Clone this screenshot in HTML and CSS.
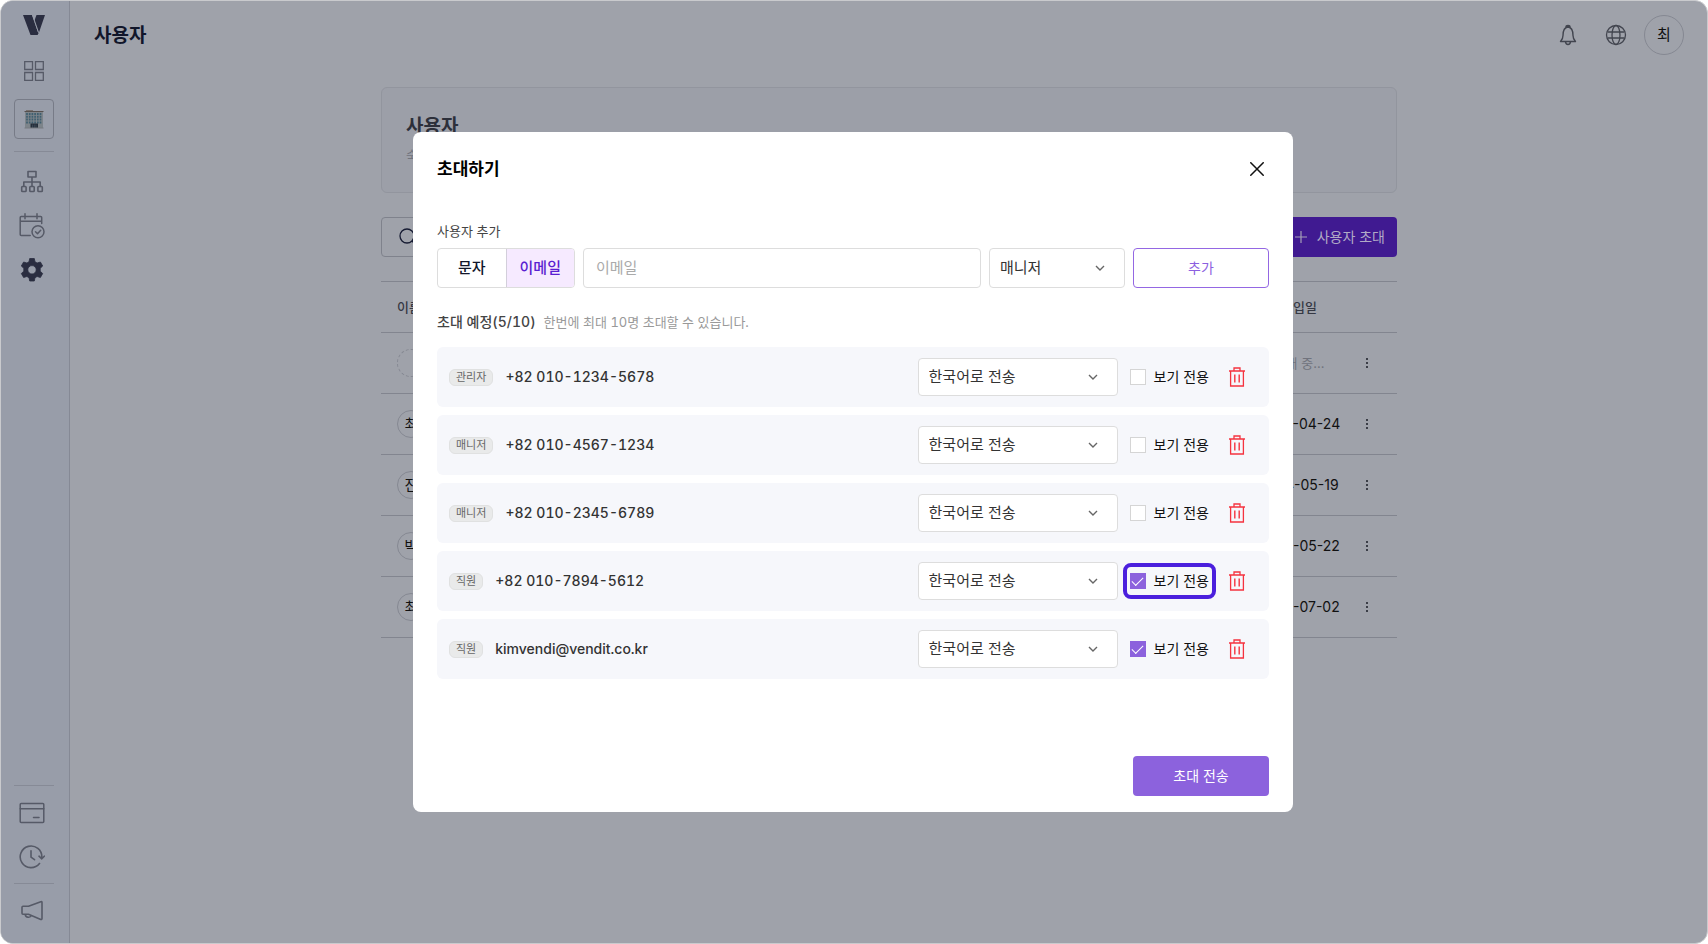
FILE: index.html
```html
<!DOCTYPE html>
<html lang="ko">

<head>
    <meta charset="UTF-8">
    <meta name="viewport" content="width=device-width, initial-scale=1.0">
    <title>사용자</title>
    <link rel="stylesheet" href="styles.css">
</head>

<body>
    <!-- shared icons -->
    <svg class="icon-defs" width="0" height="0">
        <symbol id="chevron" viewBox="0 0 10 6">
            <path d="M1 1l4 4 4-4" fill="none" stroke="#666" stroke-width="1.4" />
        </symbol>
        <symbol id="trash" viewBox="0 0 16 20">
            <path d="M0 4h16M5 3.5V1h6v2.500M1.600 4v15h12.800V4" fill="none" stroke="#f5333f" stroke-width="1.300" />
            <path d="M5.800 7.500v8M10.200 7.500v8" fill="none" stroke="#f5333f" stroke-width="1.400" />
        </symbol>
        <symbol id="dots" viewBox="0 0 4 12">
            <path d="M1 1h2v2H1zM1 5h2v2H1zM1 9h2v2H1z" fill="#3b3e47" />
        </symbol>
    </svg>

    <div class="app">
        <nav class="sidebar">
            <div class="nav-group">
                <a href="#" class="logo" aria-label="홈">
                    <svg width="22" height="20" viewBox="0 0 22 20">
                        <path d="M0 0h9l4.500 13L15.500 18.500 14.500 20H7.500z" fill="#2a2d40" />
                        <path d="M13.500 0H22L15.800 18 11.300 6z" fill="#2a2d40" />
                        <path d="M9.500 0l6 17.500" stroke="#989da9" stroke-width="1" />
                    </svg>
                </a>
                <a href="#" class="nav-dashboard" aria-label="대시보드">
                    <svg width="20" height="20" viewBox="0 0 20 20" fill="none" stroke="#565a67" stroke-width="1.300">
                        <path d="M.7.7h7.800v7.800H.7zM11.500.7h7.800v7.800h-7.800zM.7 11.500h7.800v7.800H.7zM11.500 11.500h7.800v7.800h-7.800z" />
                    </svg>
                </a>
                <a href="#" class="nav-building" aria-label="숙소">
                    <svg width="20" height="20" viewBox="0 0 20 20">
                        <path d="M2 1h7v1H2z" fill="#77706e" />
                        <path d="M1 2.500h18V19H1z" fill="#7d848a" />
                        <path d="M.5 2h19v1H.5z" fill="#56504e" />
                        <path d="M3 4v11M5.700 4v11M8.400 4v11M11.100 4v11M13.800 4v11M16.500 4v11" stroke="#3f5f70" stroke-width="1.700" stroke-dasharray="2 .8" />
                        <path d="M6.500 14.500h7.500V19H6.500z" fill="#252e3a" />
                        <path d="M8.500 15.500V19M10.300 15.500V19M12 15.500V19" stroke="#53616e" stroke-width=".5" />
                        <path d="M.5 19h19" stroke="#777a80" stroke-width="1" />
                    </svg>
                </a>
                <hr>
                <a href="#" class="nav-link" aria-label="조직">
                    <svg width="26" height="26" viewBox="0 0 26 26" fill="none" stroke="#565a67" stroke-width="1.600" stroke-linejoin="round">
                        <path d="M9 2.500h8V8H9zM13 8v9M4.800 17.500v-4.500h16.400v4.500" />
                        <rect x="2.700" y="17.500" width="4.400" height="5" rx=".8" />
                        <rect x="10.800" y="17.500" width="4.400" height="5" rx=".8" />
                        <rect x="18.900" y="17.500" width="4.400" height="5" rx=".8" />
                    </svg>
                </a>
                <a href="#" class="nav-link" aria-label="예약">
                    <svg width="26" height="26" viewBox="0 0 26 26" fill="none" stroke="#565a67" stroke-width="1.500" stroke-linecap="round" stroke-linejoin="round">
                        <path d="M22.700 10.500V4.500q0-1-1-1H2.200q-1 0-1 1v17q0 1 1 1h9M1.200 8.300h21.500M6 .8v5M18 .8v5" />
                        <circle cx="19" cy="18.700" r="6" />
                        <path d="M16.500 18.700l2 2 3.200-3.500" />
                    </svg>
                </a>
                <a href="#" class="nav-link" aria-label="설정">
                    <svg width="26" height="26" viewBox="0 0 26 26">
                        <path d="M10.700 1.500h4.600l.7 3.300 2.100 1.200 3.300-1 2.300 4-2.500 2.300v2.900l2.500 2.300-2.300 4-3.300-1-2.100 1.200-.7 3.300h-4.600l-.7-3.300-2.100-1.200-3.300 1-2.300-4 2.500-2.300v-2.900L2.300 9l2.300-4 3.300 1L10 4.800zM13 8.600a4.200 4.200 0 1 0 0 8.400 4.200 4.200 0 0 0 0-8.400z" fill="#2a2d40" stroke="#2a2d40" stroke-width=".8" stroke-linejoin="round" fill-rule="evenodd" />
                    </svg>
                </a>
            </div>
            <div class="nav-group nav-bottom">
                <hr>
                <a href="#" class="nav-link" aria-label="결제">
                    <svg width="26" height="26" viewBox="0 0 26 26" fill="none" stroke="#565a67" stroke-width="1.500" stroke-linecap="round">
                        <rect x="1.200" y="3.500" width="23.600" height="19" rx="1" />
                        <path d="M1.200 8.700h23.600M14.500 17.500h5.500" />
                    </svg>
                </a>
                <a href="#" class="nav-link" aria-label="이력">
                    <svg width="26" height="26" viewBox="0 0 26 26" fill="none" stroke="#565a67" stroke-width="1.600" stroke-linecap="round" stroke-linejoin="round">
                        <path d="M20.500 19.500A10.800 10.800 0 1 1 22.800 13.500M20 12.200l2.800 2.600 2.500-2.600M12 6.800v6.400l3.500 2.500" />
                    </svg>
                </a>
                <hr>
                <a href="#" class="nav-link" aria-label="공지">
                    <svg width="26" height="26" viewBox="0 0 26 26" fill="none" stroke="#565a67" stroke-width="1.600" stroke-linejoin="round">
                        <path d="M3 9.200q0-1 1-1H9.500L21.800 3.700q1.200-.3 1.200.8v16q0 1.200-1.200.9L9.500 16.200H4q-1 0-1-1z" />
                        <path d="M6.200 16.300a3.300 3.300 0 0 0 6.300 1" />
                    </svg>
                </a>
            </div>
        </nav>

        <div class="page">
            <header class="topbar">
                <h1>사용자</h1>
                <div class="topbar-actions">
                    <button type="button" class="icon-button" aria-label="알림">
                        <svg width="24" height="24" viewBox="0 0 24 24" fill="none" stroke="#42454f" stroke-width="1.400" stroke-linejoin="round">
                            <path d="M4.500 18.500q2.500-2.500 2.500-6 0-8 5-8.500 5 .5 5 8.500 0 3.500 2.500 6zM10 4.200q0-1.700 2-1.700t2 1.700M9.500 19q.5 2.500 2.500 2.500t2.500-2.500" />
                        </svg>
                    </button>
                    <button type="button" class="icon-button" aria-label="언어">
                        <svg width="24" height="24" viewBox="0 0 24 24" fill="none" stroke="#42454f" stroke-width="1.300">
                            <circle cx="12" cy="12" r="9.500" />
                            <ellipse cx="12" cy="12" rx="4" ry="9.500" />
                            <path d="M3.500 9h17M3.500 15h17" />
                        </svg>
                    </button>
                    <button type="button" class="profile">최</button>
                </div>
            </header>

            <main class="content">
                <section class="intro">
                    <h2>사용자</h2>
                    <p>숙소 사용자를 초대하고 관리할 수 있습니다.</p>
                </section>

                <div class="toolbar">
                    <label class="search">
                        <svg width="18" height="18" viewBox="0 0 18 18" fill="none" stroke="#171c33" stroke-width="1.300">
                            <circle cx="8" cy="8" r="7" />
                            <path d="M13 13l4 4" />
                        </svg>
                        <input type="text" aria-label="검색">
                    </label>
                    <button type="button" class="invite-button">
                        <svg width="12" height="12" viewBox="0 0 12 12" stroke="#a5a0b8" stroke-width="1.200">
                            <path d="M0 6h12M6 0v12" />
                        </svg>
                        사용자 초대
                    </button>
                </div>

                <table class="users">
                    <thead>
                        <tr>
                            <th>이름</th>
                            <th class="date">가입일</th>
                            <th class="more"></th>
                        </tr>
                    </thead>
                    <tbody>
                        <tr>
                            <td><span class="avatar pending"></span></td>
                            <td class="date waiting">초대 중...</td>
                            <td class="more"><button type="button" aria-label="더보기"><svg width="4" height="12"><use href="#dots" /></svg></button></td>
                        </tr>
                        <tr>
                            <td><span class="avatar">최</span></td>
                            <td class="date">2024-04-24</td>
                            <td class="more"><button type="button" aria-label="더보기"><svg width="4" height="12"><use href="#dots" /></svg></button></td>
                        </tr>
                        <tr>
                            <td><span class="avatar">진</span></td>
                            <td class="date">2024-05-19</td>
                            <td class="more"><button type="button" aria-label="더보기"><svg width="4" height="12"><use href="#dots" /></svg></button></td>
                        </tr>
                        <tr>
                            <td><span class="avatar">박</span></td>
                            <td class="date">2024-05-22</td>
                            <td class="more"><button type="button" aria-label="더보기"><svg width="4" height="12"><use href="#dots" /></svg></button></td>
                        </tr>
                        <tr>
                            <td><span class="avatar">최</span></td>
                            <td class="date">2024-07-02</td>
                            <td class="more"><button type="button" aria-label="더보기"><svg width="4" height="12"><use href="#dots" /></svg></button></td>
                        </tr>
                    </tbody>
                </table>
            </main>
        </div>
    </div>

    <div class="overlay">
        <div class="modal" role="dialog" aria-labelledby="modal-title">
            <div class="modal-header">
                <h2 id="modal-title">초대하기</h2>
                <button type="button" class="icon-button" aria-label="닫기">
                    <svg width="14" height="14" viewBox="0 0 14 14" stroke="#111" stroke-width="1.500">
                        <path d="M.3.300l13.400 13.400M13.700.300L.3 13.700" />
                    </svg>
                </button>
            </div>

            <label class="field-label" for="email">사용자 추가</label>
            <div class="add-row">
                <div class="toggle">
                    <button type="button">문자</button>
                    <button type="button" class="active">이메일</button>
                </div>
                <input type="text" id="email" class="email" placeholder="이메일">
                <div class="select role">
                    <select aria-label="권한">
                        <option>매니저</option>
                        <option>관리자</option>
                        <option>직원</option>
                    </select>
                    <svg width="10" height="6"><use href="#chevron" /></svg>
                </div>
                <button type="button" class="add-button">추가</button>
            </div>

            <p class="summary"><strong>초대 예정(5/10)</strong><span>한번에 최대 10명 초대할 수 있습니다.</span></p>

            <ul class="invites">
                <li>
                    <span class="badge">관리자</span>
                    <span class="contact">+82 010-1234-5678</span>
                    <div class="select">
                        <select aria-label="전송 언어">
                            <option>한국어로 전송</option>
                        </select>
                        <svg width="10" height="6"><use href="#chevron" /></svg>
                    </div>
                    <label class="view-only"><input type="checkbox">보기 전용</label>
                    <button type="button" class="delete" aria-label="삭제"><svg width="16" height="20"><use href="#trash" /></svg></button>
                </li>
                <li>
                    <span class="badge">매니저</span>
                    <span class="contact">+82 010-4567-1234</span>
                    <div class="select">
                        <select aria-label="전송 언어">
                            <option>한국어로 전송</option>
                        </select>
                        <svg width="10" height="6"><use href="#chevron" /></svg>
                    </div>
                    <label class="view-only"><input type="checkbox">보기 전용</label>
                    <button type="button" class="delete" aria-label="삭제"><svg width="16" height="20"><use href="#trash" /></svg></button>
                </li>
                <li>
                    <span class="badge">매니저</span>
                    <span class="contact">+82 010-2345-6789</span>
                    <div class="select">
                        <select aria-label="전송 언어">
                            <option>한국어로 전송</option>
                        </select>
                        <svg width="10" height="6"><use href="#chevron" /></svg>
                    </div>
                    <label class="view-only"><input type="checkbox">보기 전용</label>
                    <button type="button" class="delete" aria-label="삭제"><svg width="16" height="20"><use href="#trash" /></svg></button>
                </li>
                <li>
                    <span class="badge">직원</span>
                    <span class="contact">+82 010-7894-5612</span>
                    <div class="select">
                        <select aria-label="전송 언어">
                            <option>한국어로 전송</option>
                        </select>
                        <svg width="10" height="6"><use href="#chevron" /></svg>
                    </div>
                    <label class="view-only highlight"><input type="checkbox" checked>보기 전용</label>
                    <button type="button" class="delete" aria-label="삭제"><svg width="16" height="20"><use href="#trash" /></svg></button>
                </li>
                <li>
                    <span class="badge">직원</span>
                    <span class="contact">kimvendi@vendit.co.kr</span>
                    <div class="select">
                        <select aria-label="전송 언어">
                            <option>한국어로 전송</option>
                        </select>
                        <svg width="10" height="6"><use href="#chevron" /></svg>
                    </div>
                    <label class="view-only"><input type="checkbox" checked>보기 전용</label>
                    <button type="button" class="delete" aria-label="삭제"><svg width="16" height="20"><use href="#trash" /></svg></button>
                </li>
            </ul>

            <div class="modal-footer">
                <button type="button" class="send-button">초대 전송</button>
            </div>
        </div>
    </div>
</body>

</html>
```
FILE: styles.css
```css
* {
    box-sizing: border-box;
}

body {
    margin: 0;
    background: #fff;
    font-family: Inter, "Noto Sans CJK KR", sans-serif;
    font-size: 15px;
    line-height: 22px;
    color: #111;
}

h1,
h2,
p,
ul {
    margin: 0;
    padding: 0;
}

button,
input,
select {
    font: inherit;
    color: inherit;
}

button {
    padding: 0;
    border: none;
    background: none;
    cursor: pointer;
}

svg {
    display: block;
}

.icon-defs {
    position: absolute;
}

.icon-button {
    display: flex;
    align-items: center;
    justify-content: center;
    width: 24px;
    height: 24px;
}

/* page */
.app {
    display: flex;
    min-height: 100vh;
    border: 1px solid #c9cacd;
    border-radius: 13px;
    background: #9fa2aa;
    overflow: hidden;
}

.sidebar {
    display: flex;
    flex-direction: column;
    justify-content: space-between;
    width: 69px;
    padding: 14px 15px 10px 13px;
    background: #989da9;
    border-right: 1px solid #858995;
}

.nav-group {
    display: flex;
    flex-direction: column;
}

.nav-group hr {
    width: 100%;
    height: 1px;
    margin: 12px 0 8px;
    border: none;
    background: #868a96;
}

.nav-bottom hr {
    margin: 4px 0 5px;
}

.nav-link {
    display: flex;
    align-items: center;
    height: 44px;
    padding-left: 5px;
}

.logo {
    align-self: center;
}

.nav-dashboard {
    align-self: center;
    margin: 26px 0 18px;
}

.nav-building {
    display: flex;
    align-items: center;
    justify-content: center;
    width: 40px;
    height: 40px;
    border: 1px solid #777b87;
    border-radius: 4px;
}

.page {
    flex: 1;
    padding: 14px 23px 0 24px;
}

.topbar {
    display: flex;
    align-items: center;
    justify-content: space-between;
    height: 40px;
}

.topbar h1 {
    padding-top: 2px;
    font-size: 19px;
    font-weight: 700;
    color: #11162a;
}

.topbar-actions {
    display: flex;
    align-items: center;
    gap: 24px;
}

.profile {
    width: 40px;
    height: 40px;
    margin-left: -8px;
    border: 1px solid #858892;
    border-radius: 50%;
}

.content {
    max-width: 1016px;
    margin: 32px auto 0;
}

.intro {
    height: 106px;
    padding: 27px 24px;
    border: 1px solid #92959e;
    border-radius: 6px;
    background: #9c9fa8;
}

.intro h2 {
    font-size: 19px;
    font-weight: 700;
    line-height: 24px;
    color: #2c2f3a;
}

.intro p {
    margin-top: 5px;
    font-size: 13px;
    color: #70737d;
}

.toolbar {
    display: flex;
    justify-content: space-between;
    margin: 24px 0;
}

.search {
    display: flex;
    align-items: center;
    width: 300px;
    height: 40px;
    padding: 0 17px;
    border: 1px solid #7f828c;
    border-radius: 4px;
}

.search input {
    flex: 1;
    min-width: 0;
    border: none;
    background: none;
}

.invite-button {
    display: flex;
    align-items: center;
    gap: 10px;
    height: 40px;
    padding: 0 12px;
    border-radius: 4px;
    background: #401a91;
    font-size: 14px;
    color: #b1aac6;
}

.users {
    width: 100%;
    table-layout: fixed;
    border-collapse: collapse;
    border-top: 1px solid #82858f;
    font-size: 14px;
}

.users tr {
    border-bottom: 1px solid #82858f;
}

.users th {
    height: 51px;
    padding: 0 16px;
    font-size: 13px;
    font-weight: 500;
    text-align: left;
    color: #363944;
}

.users td {
    height: 61px;
    padding: 0 16px;
}

.users .date {
    width: 92px;
    padding: 0;
    text-align: center;
    white-space: nowrap;
}

.users .waiting {
    font-size: 13px;
    color: #70737d;
}

.users .more {
    width: 52px;
    padding: 0 8px 0 0;
}

.users .more button {
    display: block;
    margin: 0 auto;
}

.avatar {
    display: flex;
    align-items: center;
    justify-content: center;
    width: 28px;
    height: 28px;
    border: 1px solid #858892;
    border-radius: 50%;
}

.avatar.pending {
    border-style: dashed;
}

/* invite modal */
.overlay {
    position: fixed;
    inset: 0;
    display: flex;
    align-items: center;
    justify-content: center;
    padding-right: 2px;
}

.modal {
    display: flex;
    flex-direction: column;
    width: 880px;
    max-width: 100%;
    min-height: 680px;
    padding: 25px 24px 16px;
    border-radius: 8px;
    background: #fff;
}

.modal-header {
    display: flex;
    align-items: center;
    justify-content: space-between;
}

.modal-header h2 {
    font-size: 17px;
    font-weight: 700;
    line-height: 24px;
    color: #000;
}

.field-label {
    margin: 40px 0 7px;
    font-size: 13px;
    line-height: 20px;
    color: #444;
}

.add-row {
    display: flex;
    gap: 8px;
    height: 40px;
}

.toggle {
    display: flex;
    width: 138px;
    border: 1px solid #ddd;
    border-radius: 4px;
    overflow: hidden;
}

.toggle button {
    flex: 1;
    font-weight: 500;
    color: #11162a;
}

.toggle .active {
    border-left: 1px solid #d3cfdb;
    background: #f6eaff;
    color: #5a1fd1;
}

.email {
    flex: 1;
    min-width: 0;
    padding: 0 12px;
    border: 1px solid #ddd;
    border-radius: 4px;
}

.email::placeholder {
    color: #aaa;
}

.select {
    position: relative;
    width: 200px;
    height: 38px;
}

.select select {
    width: 100%;
    height: 100%;
    padding: 0 10px;
    border: 1px solid #ddd;
    border-radius: 4px;
    background: #fff;
    color: #333;
    appearance: none;
}

.select svg {
    position: absolute;
    top: 50%;
    right: 20px;
    margin-top: -3px;
    pointer-events: none;
}

.select.role {
    width: 136px;
    height: 40px;
}

.add-button {
    width: 136px;
    border: 1px solid #9467e3;
    border-radius: 4px;
    font-size: 14px;
    color: #8c5fe0;
}

.summary {
    display: flex;
    gap: 8px;
    margin: 23px 0 14px;
    font-size: 13px;
    font-variant-numeric: tabular-nums;
    color: #999;
}

.summary strong {
    font-size: 14px;
    font-weight: 500;
    color: #444;
}

.invites {
    display: flex;
    flex-direction: column;
    gap: 8px;
    list-style: none;
}

.invites li {
    display: flex;
    align-items: center;
    height: 60px;
    padding: 0 24px 0 12px;
    border-radius: 6px;
    background: #f6f7fb;
}

.badge {
    padding: 0 6px;
    border: 1px solid #e0e1e1;
    border-radius: 6px;
    background: #e9eaea;
    font-size: 11px;
    line-height: 15px;
    color: #666;
}

.contact {
    flex: 1;
    margin-left: 12px;
    font-size: 14px;
    font-weight: 500;
    font-variant-numeric: tabular-nums;
    color: #333;
}

.view-only {
    display: flex;
    align-items: center;
    gap: 8px;
    margin: 0 20px 0 12px;
    border-radius: 1px;
    font-size: 14px;
    color: #111;
}

.view-only.highlight {
    outline: 4px solid #4b1fdd;
    outline-offset: 3px;
}

.view-only input {
    display: flex;
    align-items: center;
    justify-content: center;
    width: 16px;
    height: 16px;
    margin: 0;
    border: 1px solid #d5d5d5;
    background: #fff;
    appearance: none;
}

.view-only input:checked {
    border-color: #8c62dd;
    background: #8c62dd;
}

.view-only input:checked::before {
    content: "";
    width: 10px;
    height: 5px;
    margin-bottom: 3px;
    border-left: 1px solid #fff;
    border-bottom: 1px solid #fff;
    transform: rotate(-45deg);
}

.modal-footer {
    display: flex;
    justify-content: flex-end;
    margin-top: auto;
}

.send-button {
    width: 136px;
    height: 40px;
    border-radius: 4px;
    background: #8c62dd;
    font-size: 14px;
    color: #fff;
}
```
